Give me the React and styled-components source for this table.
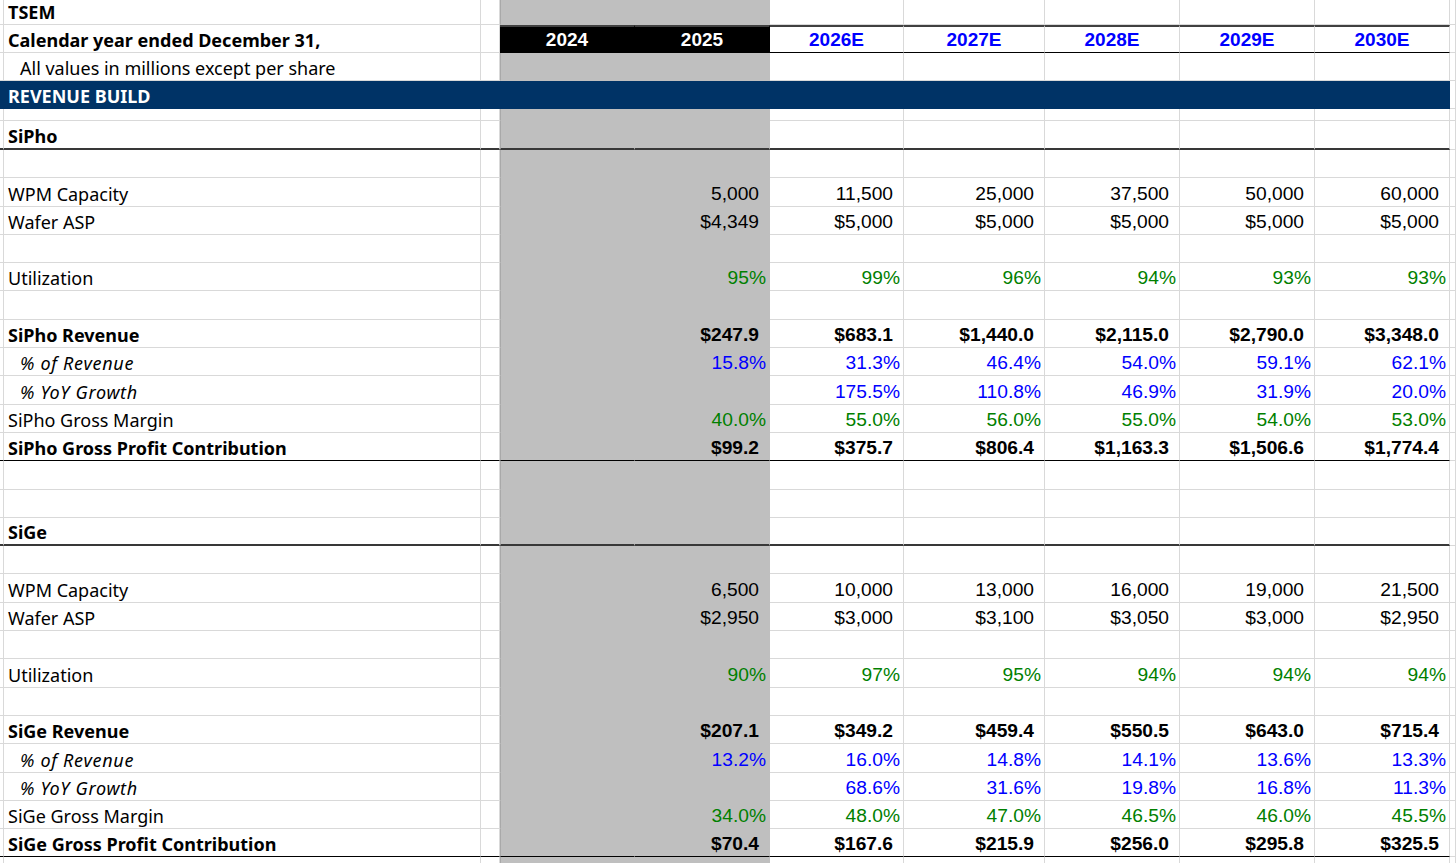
import React from 'react';
import styled, { createGlobalStyle, css } from 'styled-components';

const GRID = '#d9d9d9';
const HIST = '#bfbfbf';
const NAVY = '#003366';
const BLUE = '#0000ff';
const GREEN = '#008000';
const COLS = '4px 477px 19px 135px 135px 134px 141px 135px 135px 135px 1fr';
const ROW = 28.3;

const GlobalStyle = createGlobalStyle`
  html, body { margin: 0; padding: 0; background: #fff; overflow: hidden; }
`;

const Sheet = styled.div`
  display: flex;
  flex-direction: column;
  width: 1456px;
  height: 863px;
  overflow: hidden;
`;

const Row = styled.div`
  display: grid;
  grid-template-columns: ${COLS};
  flex: 0 0 ${(p) => p.$h}px;
  height: ${(p) => p.$h}px;
`;

const fills = { white: '#fff', hist: HIST, navy: NAVY, black: '#000' };

const ruleBorder = (p) => {
  if (p.$rule === 'thick') return '2px solid #383838';
  if (p.$rule === 'total' || p.$rule === 'under') return '1px solid #000';
  return `1px solid ${p.$fill && p.$fill !== 'white' ? 'transparent' : GRID}`;
};

const Cell = styled.div`
  box-sizing: border-box;
  display: flex;
  align-items: flex-end;
  justify-content: ${(p) => p.$align || 'flex-start'};
  padding-bottom: 1px;
  overflow: hidden;
  white-space: nowrap;
  min-width: 0;
  background: ${(p) => fills[p.$fill || 'white']};
  border-right: 1px solid ${(p) => (p.$fill && p.$fill !== 'white' ? 'transparent' : GRID)};
  border-bottom: ${ruleBorder};
  ${(p) => p.$edge && css`border-left: 1px solid #a9a9a9;`}
  ${(p) => p.$top && css`border-top: 2px solid #404040;`}
`;

const Label = styled.span`
  font-family: 'Noto Sans', 'Liberation Sans', sans-serif;
  font-size: 18px;
  line-height: 22px;
  font-weight: ${(p) => (p.$bold ? 700 : 400)};
  font-style: ${(p) => (p.$italic ? 'italic' : 'normal')};
  letter-spacing: ${(p) => (p.$italic ? '0.7px' : 'normal')};
  color: ${(p) => (p.$light ? '#fff' : '#000')};
  padding-left: ${(p) => (p.$indent ? 16 : 4)}px;
`;

const Num = styled.span`
  font-family: 'Liberation Sans', Arial, sans-serif;
  font-size: 19.2px;
  line-height: 22px;
  font-weight: ${(p) => (p.$bold ? 700 : 400)};
  color: ${(p) => p.$color || '#000'};
  padding-right: ${(p) => (p.$pct ? 3 : 10)}px;
`;

const Year = styled.span`
  width: 100%;
  text-align: center;
  font-family: 'Liberation Sans', Arial, sans-serif;
  font-size: 19px;
  line-height: 22px;
  font-weight: 700;
  color: ${(p) => (p.$light ? '#fff' : BLUE)};
`;

const EMPTY = ['', '', '', '', '', ''];

function DataRow({ h = ROW, label, bold, italic, indent, values = EMPTY, pct, color, rule, fill }) {
  const f = fill || null;
  return (
    <Row $h={h}>
      <Cell $fill={f} $rule={rule} />
      <Cell $fill={f} $rule={rule}>
        {label && (
          <Label $bold={bold} $italic={italic} $indent={indent} $light={f === 'navy'}>
            {label}
          </Label>
        )}
      </Cell>
      <Cell $fill={f} $rule={rule} />
      <Cell $fill={f || 'hist'} $edge={!f} $rule={rule} />
      {values.map((v, i) => (
        <Cell key={i} $fill={f || (i === 0 ? 'hist' : 'white')} $rule={rule} $align="flex-end">
          {v && (
            <Num $bold={bold} $pct={pct} $color={color}>
              {v}
            </Num>
          )}
        </Cell>
      ))}
      <Cell />
    </Row>
  );
}

function HeaderRow() {
  return (
    <Row $h={28}>
      <Cell />
      <Cell>
        <Label $bold>Calendar year ended December 31,</Label>
      </Cell>
      <Cell />
      {['2024', '2025'].map((y) => (
        <Cell key={y} $fill="black" $top>
          <Year $light>{y}</Year>
        </Cell>
      ))}
      {['2026E', '2027E', '2028E', '2029E', '2030E'].map((y) => (
        <Cell key={y} $top $rule="under">
          <Year>{y}</Year>
        </Cell>
      ))}
      <Cell />
    </Row>
  );
}

const segments = [
  {
    name: 'SiPho',
    wpm: ['5,000', '11,500', '25,000', '37,500', '50,000', '60,000'],
    asp: ['$4,349', '$5,000', '$5,000', '$5,000', '$5,000', '$5,000'],
    util: ['95%', '99%', '96%', '94%', '93%', '93%'],
    rev: ['$247.9', '$683.1', '$1,440.0', '$2,115.0', '$2,790.0', '$3,348.0'],
    share: ['15.8%', '31.3%', '46.4%', '54.0%', '59.1%', '62.1%'],
    yoy: ['', '175.5%', '110.8%', '46.9%', '31.9%', '20.0%'],
    gm: ['40.0%', '55.0%', '56.0%', '55.0%', '54.0%', '53.0%'],
    gp: ['$99.2', '$375.7', '$806.4', '$1,163.3', '$1,506.6', '$1,774.4'],
  },
  {
    name: 'SiGe',
    wpm: ['6,500', '10,000', '13,000', '16,000', '19,000', '21,500'],
    asp: ['$2,950', '$3,000', '$3,100', '$3,050', '$3,000', '$2,950'],
    util: ['90%', '97%', '95%', '94%', '94%', '94%'],
    rev: ['$207.1', '$349.2', '$459.4', '$550.5', '$643.0', '$715.4'],
    share: ['13.2%', '16.0%', '14.8%', '14.1%', '13.6%', '13.3%'],
    yoy: ['', '68.6%', '31.6%', '19.8%', '16.8%', '11.3%'],
    gm: ['34.0%', '48.0%', '47.0%', '46.5%', '46.0%', '45.5%'],
    gp: ['$70.4', '$167.6', '$215.9', '$256.0', '$295.8', '$325.5'],
  },
];

function Segment({ s, first }) {
  return (
    <>
      {!first && <DataRow />}
      {!first && <DataRow />}
      <DataRow h={first ? 29 : ROW} label={s.name} bold rule="thick" />
      <DataRow />
      <DataRow label="WPM Capacity" values={s.wpm} />
      <DataRow label="Wafer ASP" values={s.asp} />
      <DataRow />
      <DataRow label="Utilization" values={s.util} pct color={GREEN} />
      <DataRow />
      <DataRow label={`${s.name} Revenue`} values={s.rev} bold />
      <DataRow label="% of Revenue" italic indent values={s.share} pct color={BLUE} />
      <DataRow label="% YoY Growth" italic indent values={s.yoy} pct color={BLUE} />
      <DataRow label={`${s.name} Gross Margin`} values={s.gm} pct color={GREEN} />
      <DataRow label={`${s.name} Gross Profit Contribution`} values={s.gp} bold rule="total" />
    </>
  );
}

export default function App() {
  return (
    <>
      <GlobalStyle />
      <Sheet>
        <DataRow h={25} label="TSEM" bold />
        <HeaderRow />
        <DataRow h={28} label="All values in millions except per share" indent />
        <DataRow h={28} label="REVENUE BUILD" bold fill="navy" />
        <DataRow h={12} />
        {segments.map((s, i) => (
          <Segment key={s.name} s={s} first={i === 0} />
        ))}
        <DataRow />
      </Sheet>
    </>
  );
}
